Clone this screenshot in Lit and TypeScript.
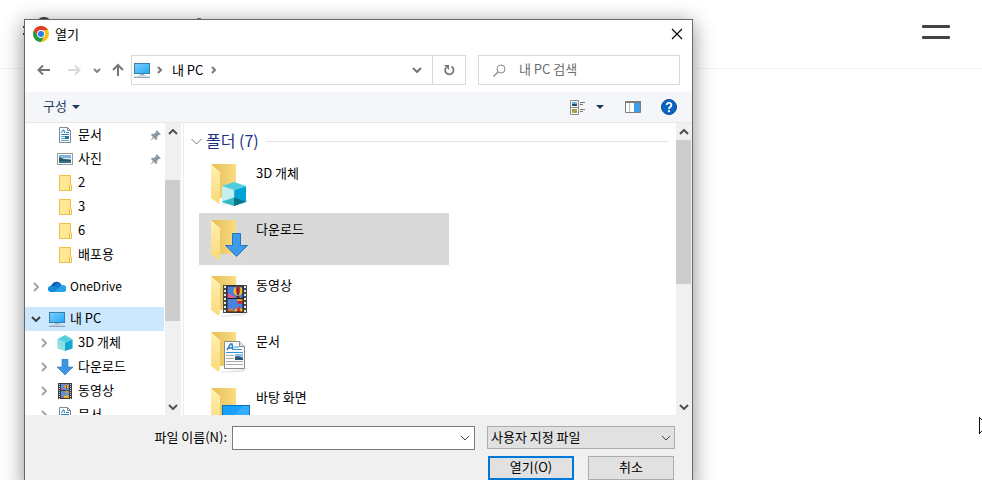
import { LitElement, html, svg, css, nothing } from "lit";
import type { SVGTemplateResult, TemplateResult } from "lit";
import { customElement } from "lit/decorators.js";
import { classMap } from "lit/directives/class-map.js";

const icon = (w: number, h: number, body: SVGTemplateResult, vb = `0 0 ${w} ${h}`) =>
  html`<svg width=${w} height=${h} viewBox=${vb} aria-hidden="true">${body}</svg>`;

const stroke = (w: number, h: number, d: string, color: string, sw = 2) =>
  icon(w, h, svg`<path d=${d} fill="none" stroke=${color} stroke-width=${sw} />`);

const chevronRight = (color: string) => stroke(6, 10, "M1 1l4 4-4 4", color);
const chevronDown = (color: string) => stroke(10, 6, "M1 1l4 4 4-4", color);
const chevronUp = (color: string) => stroke(10, 6, "M1 5l4-4 4 4", color);
const thinDown = (color: string) => stroke(10, 6, "M1 1l4 4 4-4", color, 1);

const monitor = () => icon(18, 16, svg`
  <defs><linearGradient id="scr" x1="0" y1="0" x2="1" y2="1"><stop offset="0" stop-color="#7fd0ff"/><stop offset="1" stop-color="#22a7f7"/></linearGradient></defs>
  <rect x="1.5" y="1.5" width="15" height="10" fill="url(#scr)" stroke="#3a7fa6"/>
  <path d="M7 12h4v1.200h-4z" fill="#9fb3c0"/><path d="M5 13h8v1h-8z" fill="#c4d1da"/>
  <path d="M1 15.300h16" stroke="#8a9fb0" stroke-width="1.200"/>`);

const cubeBody = svg`
  <path d="M0 5L9 9V19L0 16Z" fill="#8fe0e6"/><path d="M9 9L18 5V16L9 19Z" fill="#12a9cf"/>
  <path d="M0 5L9 0L18 5L9 9Z" fill="#55cfdf"/>`;
const cube = () => icon(16, 16, cubeBody, "0 0 18 19");

const arrowPath = "M5 0h6v8h5l-8 8-8-8h5z";
const download = () => icon(16, 16, svg`<path d=${arrowPath} fill="#3c96e4" stroke="#2b78bf" stroke-width=".6"/>`);

const balloon = (x: number, y: number) => svg`
  <circle cx=${x} cy=${y} r="4.500" fill="#f6c516"/>
  <path d="M${x - 2} ${y - 4}q-1 4 1 8h2q2-4 1-8z" fill="#d8342a"/>
  <path d="M${x} ${y - 4}v8" stroke="#2c2a80" stroke-width="1.200"/>
  <path d="M${x - 1.500} ${y + 5}h3v2h-3z" fill="#54301a"/>`;

const filmBody = svg`
  <rect width="24" height="28" fill="#4b4b4b"/>
  <path d="M2 1v27M22 1v27" stroke="#e8e8e8" stroke-width="2" stroke-dasharray="2 2"/>
  <rect x="4" y="1" width="16" height="12" fill="#4a82e0"/><rect x="4" y="14" width="16" height="13" fill="#4a82e0"/>
  <path d="M4 8l5 2 4 3H4z" fill="#e0568d"/><path d="M4 25l4-2 4 4H4z" fill="#d97728"/>
  ${balloon(15, 6)}<circle cx="17" cy="16" r="3" fill="#ca2b39"/><path d="M14 15h6" stroke="#f6c516" stroke-width="1.500"/>
  <path d="M11 27a5 5 0 0 1 9-2v2z" fill="#f6c516"/><path d="M14 27q-1-3 1-5h2q1 2 0 5z" fill="#d8342a"/>
  <path d="M4 1h16v26h-16zM4 13.500h16" fill="none" stroke="#1b1b1b"/>`;
const film = () => icon(14, 16, svg`
  <rect width="14" height="16" fill="#3d3d3d"/><path d="M1.500 1v15M12.500 1v15" stroke="#c9c9c9" stroke-dasharray="1 1"/>
  <path d="M3 1h8v6H3zM3 8h8v7H3z" fill="#5b8fe0"/><path d="M3 5l3 1v1H3zM3 13l3 1v1H3z" fill="#b0607d"/>
  <circle cx="8.500" cy="3.500" r="2" fill="#e6b428"/><path d="M8 2h1v4H8z" fill="#b23a2c"/>
  <circle cx="9" cy="9" r="1.500" fill="#d9a326"/><path d="M6 15a2.500 2.500 0 0 1 5-1v1z" fill="#e6b428"/>`);

const docBody = svg`
  <path d="M.5 .5h15l5 5v22h-20z" fill="#fbfbfb" stroke="#8b8b8b"/><path d="M15.500 .5v5h5" fill="#e4e4e4" stroke="#8b8b8b"/>
  <path d="M3 9l3.500-6h1.500l1 6M4.500 7h4" fill="none" stroke="#1b7fc4" stroke-width="1.400"/>
  <path d="M10 6h5M10 8.500h8M2 11.500h17" stroke="#2d98dd"/>
  <path d="M2 14.500h8M2 17.500h8M2 20.500h17M2 23.500h17" stroke="#a8a8a8"/>
  <rect x="11" y="13" width="8" height="6" fill="#8cc1ee"/><path d="M11 16l3-1 5 2v2h-8z" fill="#31566b"/>`;
const doc = () => icon(14, 16, svg`
  <path d="M1.500 .5h8l3 3v12h-11z" fill="#fff" stroke="#7f8b92"/><path d="M9.500 .5v3h3" fill="none" stroke="#7f8b92"/>
  <path d="M3.500 6l1.500-3h1l.5 3" fill="none" stroke="#1b87cc"/>
  <path d="M8 5.500h3M3 7.500h8" stroke="#1b87cc"/><path d="M3 9.500h4M3 11.500h4M3 13.500h8" stroke="#5aa5d4"/>
  <rect x="7" y="9" width="4" height="3" fill="#356f92"/>`);

const photo = () => icon(16, 12, svg`
  <rect x=".5" y=".5" width="15" height="11" fill="#fff" stroke="#9a9a9a"/><rect x="2" y="2" width="12" height="8" fill="#7fb2e5"/>
  <path d="M2 5h12v1H2z" fill="#d4ebf6"/><path d="M2 4l5 2 7 1v3H2z" fill="#2d5a55"/><path d="M2 8h12v2H2z" fill="#386d93"/>`);

const smallFolder = () => icon(14, 16, svg`
  <path d="M1.500 .5h11v15h-11z" fill="#ffe794" stroke="#e8c04a"/><path d="M11.500 10.500q0-1 1-1t1 1v5h-2z" fill="#fff0b4" stroke="#e8c04a"/>`);

const cloud = () => icon(18, 12, svg`
  <path d="M4 11a4 4 0 0 1-.5-7A5.500 5.500 0 0 1 13 3l-6 6z" fill="#0a5fb4"/>
  <path d="M7 4a5 5 0 0 1 6-1 4 4 0 0 1 1 2l-7 6z" fill="#1179cf"/>
  <path d="M3 11a3 3 0 0 1 0-6h3l9 6z" fill="#1489da"/><path d="M6 11l7-6a3.500 3.500 0 1 1 1.500 6z" fill="#28a3e8"/>`);

const pin = () => icon(11, 11, svg`
  <path d="M6.500 0L11 4.500 9.800 5 9 4.800 7 7l.2 2.200L6 10 1 5l.9-1.200L4 4l2.200-2L6 1z" fill="#8b98a1"/><path d="M0 11l3-4 1 1z" fill="#8b98a1"/>`);

const bigFolder = (overlay: SVGTemplateResult) => icon(40, 44, svg`
  <defs><linearGradient id="back" x1="0" x2="1"><stop offset="0" stop-color="#e3bd55"/><stop offset="1" stop-color="#fbdc82"/></linearGradient>
  <linearGradient id="flap" x1="0" y1="0" x2="0" y2="1"><stop offset="0" stop-color="#fff0b4"/><stop offset="1" stop-color="#fbd977"/></linearGradient></defs>
  <path d="M9 41l29-4-6 4-22 1z" fill="#dcdcdc" opacity=".6"/>
  <path d="M0 1h25v34H8z" fill="url(#back)"/><path d="M0 1l9 8v26l-1 6-8-6z" fill="url(#flap)"/>${overlay}`);

const overlayCube = svg`
  <path d="M11 23l12 4v16l-12-4z" fill="#c4eff0"/><path d="M23 27l12-4v16l-12 4z" fill="#00a3d6"/>
  <path d="M11 23l12-4 12 4-12 4z" fill="#4fcfdd"/><path d="M11 38.500l12-4v8.500l-12-4z" fill="#35b9c6"/>
  <path d="M23 34.500l12 4-12 4.500z" fill="#087686"/><path d="M23 27v8" stroke="#8adfe5" stroke-width=".6"/>`;
const overlayArrow = svg`<path d="M21.500 14.500h8v12h7l-11 11-11-11h7z" fill="#3d9be9" stroke="#2675bb"/>`;
const overlayFilm = svg`<g transform="translate(12 10)">${filmBody}</g>`;
const overlayDoc = svg`<g transform="translate(13 10)">${docBody}</g>`;
const overlayDesktop = svg`<rect x="11.500" y="18.500" width="27" height="22" fill="#18a0fb" stroke="#0873bd"/><path d="M12 40l20-21h6v21z" fill="#33adff"/>`;

interface Entry { label: string; art: () => TemplateResult; mark?: string; pinned?: boolean; latin?: boolean }

const quick: Entry[] = [
  { label: "문서", art: doc, pinned: true },
  { label: "사진", art: photo, pinned: true },
  { label: "2", art: smallFolder },
  { label: "3", art: smallFolder },
  { label: "6", art: smallFolder },
  { label: "배포용", art: smallFolder },
];
const computer: Entry[] = [
  { label: "3D 개체", art: cube, mark: "closed" },
  { label: "다운로드", art: download, mark: "closed" },
  { label: "동영상", art: film, mark: "closed" },
  { label: "문서", art: doc, mark: "closed" },
];
const folders = [
  { label: "3D 개체", overlay: overlayCube },
  { label: "다운로드", overlay: overlayArrow, hot: true },
  { label: "동영상", overlay: overlayFilm },
  { label: "문서", overlay: overlayDoc },
  { label: "바탕 화면", overlay: overlayDesktop },
];

const base = css`
  *, *::before, *::after { box-sizing: border-box; }
  svg { display: block; flex: none; }
  button, input, select { font: inherit; color: inherit; margin: 0; padding: 0; border: 0; border-radius: 0; background: none; outline: none; }
  button { display: flex; align-items: center; justify-content: center; }
`;

@customElement("scroll-rail")
class ScrollRail extends LitElement {
  static properties = { offset: { type: Number }, length: { type: Number } };
  declare offset: number;
  declare length: number;
  static styles = [base, css`
    :host { display: flex; flex-direction: column; width: 16px; flex: none; background: #f0f0f0; }
    .step { height: 17px; width: 15px; flex: none; }
    .track { flex: 1; min-height: 0; }
    .thumb { width: 15px; background: #cdcdcd; }
  `];
  render() {
    return html`<button class="step" aria-label="위로">${chevronUp("#505050")}</button>
      <div class="track"><div class="thumb" style="margin-top:${this.offset}px;height:${this.length}px"></div></div>
      <button class="step" aria-label="아래로">${chevronDown("#505050")}</button>`;
  }
}

@customElement("folder-tree")
class FolderTree extends LitElement {
  static styles = [base, css`
    :host { display: flex; flex-direction: column; gap: 8px; flex: 1; min-width: 0; overflow: hidden; }
    .group { display: flex; flex-direction: column; flex: none; }
    .row { display: flex; height: 24px; width: 100%; padding: 0 3px 0 2px; justify-content: flex-start; text-align: left; }
    .child { padding-left: 10px; }
    .selected { background: #cce8ff; }
    .mark { width: 17px; display: flex; justify-content: center; }
    .art { width: 20px; display: flex; justify-content: center; margin: 0 3px; }
    .name { flex: 1; padding-bottom: 2px; white-space: nowrap; }
    .latin { font-size: 12px; }
  `];
  private row(e: Entry, child = true, selected = false) {
    return html`<button class=${classMap({ row: true, child, selected })}>
      <span class="mark">${e.mark === "open" ? chevronDown("#3b4148") : e.mark ? chevronRight("#a6a6a6") : nothing}</span>
      <span class="art">${e.art()}</span><span class=${classMap({ name: true, latin: !!e.latin })}>${e.label}</span>${e.pinned ? pin() : nothing}
    </button>`;
  }
  render() {
    return html`<div class="group">${quick.map((e) => this.row(e))}</div>
      <div class="group">${this.row({ label: "OneDrive", art: cloud, mark: "closed", latin: true }, false)}</div>
      <div class="group">${this.row({ label: "내 PC", art: monitor, mark: "open" }, false, true)}${computer.map((e) => this.row(e))}</div>`;
  }
}

@customElement("open-dialog")
class OpenDialog extends LitElement {
  static styles = [base, css`
    :host { display: block; background: #fff; border: 1px solid #686868; box-shadow: 0 4px 20px rgba(0, 0, 0, 0.45); }
    .title { display: flex; align-items: center; height: 28px; padding: 0 8px; gap: 6px; }
    .title h1 { flex: 1; margin: 0; font-size: 13px; font-weight: 400; }
    .nav { display: flex; align-items: center; height: 44px; padding: 0 12px 0 4px; }
    .step { width: 30px; height: 30px; }
    .recent { width: 16px; }
    .up { width: 26px; }
    .address { display: flex; align-items: center; flex: 1; height: 30px; border: 1px solid #d9d9d9; }
    .crumb { gap: 6px; padding: 0 1px; height: 28px; }
    .here { gap: 8px; padding: 0 8px; }
    .space { flex: 1; }
    .drop { width: 30px; height: 28px; }
    .refresh { width: 33px; height: 28px; border-left: 1px solid #d9d9d9; }
    .search { display: flex; align-items: center; width: 202px; height: 30px; margin-left: 12px; padding-left: 14px; gap: 13px; border: 1px solid #d9d9d9; }
    .search input { flex: 1; min-width: 0; padding-bottom: 2px; }
    .search input::placeholder { color: #6d6d6d; opacity: 1; }
    .bar { display: flex; align-items: center; height: 31px; padding: 0 15px 0 18px; background: #f4f6f9; border-bottom: 1px solid #e6e9ec; color: #1e395b; }
    .organize { gap: 5px; }
    .organize span { padding-bottom: 2px; }
    .view { gap: 10px; margin-right: 21px; }
    .preview { margin-right: 20px; }
    .body { display: flex; height: 292px; }
    .side { display: flex; width: 159px; flex: none; border-right: 1px solid #ececec; }
    .side scroll-rail { margin: 0 2px 0 1px; }
    .files { flex: 1; min-width: 0; overflow: hidden; padding: 6px 8px 0 7px; }
    .heading { display: flex; align-items: center; gap: 4px; height: 24px; margin: 0 0 4px; font-size: 16px; font-weight: 400; color: #1e3287; }
    .heading span { padding-bottom: 2px; }
    .heading::after { content: ""; flex: 1; height: 1px; margin-left: 3px; background: #e2e2e2; }
    .list { display: flex; flex-direction: column; gap: 4px; padding-left: 8px; }
    .tile { width: 250px; height: 52px; padding: 6px 12px; gap: 5px; justify-content: flex-start; align-items: flex-start; line-height: 20px; }
    .hot { background: #d9d9d9; }
    .foot { display: grid; grid-template-columns: 1fr 188px; gap: 6px 12px; padding: 11px 17px 10px; background: #f0f0f0; }
    .field { display: flex; align-items: center; justify-content: flex-end; gap: 5px; }
    .field label { padding-bottom: 2px; }
    .combo { display: flex; width: 243px; height: 24px; border: 1px solid #7a7a7a; background: #fff; }
    .combo input { flex: 1; min-width: 0; padding: 0 4px; }
    .combo button { width: 18px; }
    .type { display: grid; height: 24px; }
    .type select, .type svg { grid-area: 1 / 1; }
    .type svg { justify-self: end; align-self: center; margin-right: 4px; pointer-events: none; }
    .type select { appearance: none; width: 100%; height: 23px; padding: 0 0 2px 3px; border: 1px solid #adadad; background: #e1e1e1; }
    .actions { grid-column: 2; display: grid; grid-template-columns: 86px 86px; gap: 14px; padding-left: 1px; }
    .actions button { height: 24px; padding-bottom: 2px; background: #e1e1e1; border: 1px solid #adadad; }
    .actions .primary { border: 2px solid #0078d7; }
  `];
  render() {
    return html`
      <div class="title">
        ${icon(16, 16, svg`<circle cx="8" cy="8" r="8" fill="#fbc116"/>
          <path d="M1.100 4A8 8 0 0 1 14.900 4H8l-3.500 6z" fill="#e33b2e"/><path d="M1.100 4A8 8 0 0 0 8 16l3.500-6H4.500z" fill="#1e9c4b"/>
          <circle cx="8" cy="8" r="3.900" fill="#fff"/><circle cx="8" cy="8" r="3" fill="#2f7bea"/>`)}
        <h1>열기</h1>
        <button aria-label="닫기">${icon(14, 14, svg`<path d="M2 2l10 10M12 2L2 12" stroke="#000" stroke-width="1.100"/>`)}</button>
      </div>
      <div class="nav">
        <button class="step" aria-label="뒤로">${stroke(14, 12, "M13 6H2M6 1.500L1.500 6 6 10.500", "#757575")}</button>
        <button class="step" aria-label="앞으로">${stroke(14, 12, "M1 6h11M8 1.500L12.500 6 8 10.500", "#dadada")}</button>
        <button class="step recent" aria-label="최근 위치">${stroke(8, 5, "M1 1l3 3 3-3", "#858585")}</button>
        <button class="step up" aria-label="위로">${stroke(12, 14, "M6 13V2M1 7l5-5 5 5", "#757575")}</button>
        <div class="address">
          <button class="crumb" aria-label="위치">${monitor()}${stroke(6, 8, "M1 1l3 3-3 3", "#777")}</button>
          <button class="crumb here">내 PC ${stroke(6, 8, "M1 1l3 3-3 3", "#777")}</button>
          <span class="space"></span>
          <button class="drop" aria-label="이전 위치">${chevronDown("#757575")}</button>
          <button class="refresh" aria-label="새로 고침">${icon(12, 12, svg`<path d="M8.500 2.500A4.200 4.200 0 1 1 3 3.500" fill="none" stroke="#757575" stroke-width="1.700"/><path d="M1 1h5v5z" fill="#757575"/>`)}</button>
        </div>
        <div class="search">
          ${icon(13, 13, svg`<circle cx="8" cy="5" r="4" fill="none" stroke="#8a8a8a"/><path d="M5 8L.5 12.500" stroke="#8a8a8a" stroke-width="1.300"/>`)}
          <input type="text" placeholder="내 PC 검색" aria-label="내 PC 검색" />
        </div>
      </div>
      <div class="bar">
        <button class="organize"><span>구성</span>${icon(8, 4, svg`<path d="M0 0h8L4 4z" fill="#1e395b"/>`)}</button>
        <span class="space"></span>
        <button class="view" aria-label="보기">
          ${icon(16, 15, svg`<path d="M.5 .5h8v14h-8zM.5 7.500h8" fill="#fff" stroke="#8b8b8b"/>
            <path d="M2 2h5v2H2z" fill="#67aee6"/><path d="M2 4h5v2H2z" fill="#24516b"/><path d="M2 9h5v4H2z" fill="#8bbd4b"/><path d="M2 9h2v2H2zM5 11h2v2H5z" fill="#d37936"/>
            <path d="M10 2.500h5M10 4.500h3M10 9.500h5M10 11.500h3" stroke="#777"/>`)}
          ${icon(8, 4, svg`<path d="M0 0h8L4 4z" fill="#1e395b"/>`)}
        </button>
        <button class="preview" aria-label="미리 보기 창">
          ${icon(16, 12, svg`<path d="M.5 .5h15v11H.5z" fill="#fff" stroke="#7d7d7d"/><path d="M0 0h16v2H0z" fill="#7d7d7d"/><path d="M4.500 2v9" stroke="#bbb"/><path d="M9 2h6v9H9z" fill="#3f9de8"/>`)}
        </button>
        <button aria-label="도움말">
          ${icon(16, 16, svg`<circle cx="8" cy="8" r="7.500" fill="#0b66c3" stroke="#084b91"/><path d="M5.700 6a2.300 2.300 0 1 1 3.600 1.900Q8 8.700 8 10" fill="none" stroke="#fff" stroke-width="1.900"/><circle cx="8" cy="12.200" r="1.100" fill="#fff"/>`)}
        </button>
      </div>
      <div class="body">
        <nav class="side"><folder-tree></folder-tree><scroll-rail offset="40" length="141"></scroll-rail></nav>
        <section class="files">
          <h2 class="heading">${stroke(11, 7, "M.5 1l5 5 5-5", "#777", 1)}<span>폴더 (7)</span></h2>
          <div class="list">${folders.map((f) => html`<button class=${classMap({ tile: true, hot: !!f.hot })}>${bigFolder(f.overlay)}<span>${f.label}</span></button>`)}</div>
        </section>
        <scroll-rail offset="0" length="144"></scroll-rail>
      </div>
      <div class="foot">
        <div class="field">
          <label for="file">파일 이름(N):</label>
          <div class="combo"><input id="file" type="text" /><button aria-label="목록">${thinDown("#444")}</button></div>
        </div>
        <div class="type"><select aria-label="파일 형식"><option>사용자 지정 파일</option></select>${thinDown("#444")}</div>
        <div class="actions"><button class="primary">열기(O)</button><button>취소</button></div>
      </div>`;
  }
}

@customElement("app-root")
class AppRoot extends LitElement {
  static styles = [base, css`
    :host { display: block; position: relative; height: 100vh; overflow: hidden; background: #fff;
      font: 13px/18px "Noto Sans CJK KR", sans-serif; color: #000; }
    .top { display: flex; justify-content: space-between; align-items: center; height: 69px; padding: 0 32px 4px 22px; border-bottom: 1px solid #f5f5f5; }
    .brand { display: block; }
    .menu { flex-direction: column; gap: 8px; }
    .line { width: 28px; height: 3px; border-radius: 1px; background: #444; }
    open-dialog { position: absolute; top: 19px; left: 24px; right: 289px; }
    .pointer { position: absolute; right: 0; top: 417px; }
  `];
  render() {
    return html`
      <header class="top">
        <a class="brand" href="#" aria-label="홈">${icon(180, 36, svg`<circle cx="22" cy="11" r="8" fill="#34404c"/><path d="M1 12h1v2H1zM1 19h1v2H1z" fill="#34404c"/><path d="M175 4h4v3h-4z" fill="#777"/>`)}</a>
        <button class="menu" aria-label="메뉴"><span class="line"></span><span class="line"></span></button>
      </header>
      <open-dialog role="dialog" aria-label="열기"></open-dialog>
      <div class="pointer">${icon(3, 17, svg`<path d="M.5 0v17M.5 .5l3 3M.5 16.500l3-3" stroke="#111" fill="none"/>`)}</div>`;
  }
}
